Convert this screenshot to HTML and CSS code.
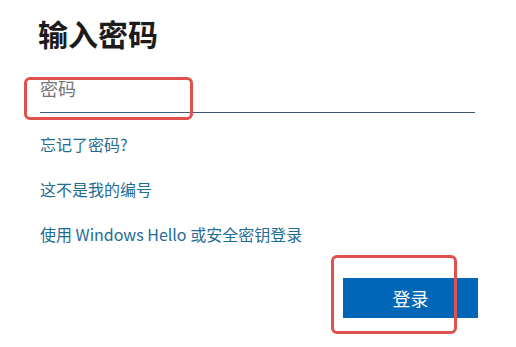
FILE: index.html
```html
<!DOCTYPE html>
<html lang="zh">
  <head>
    <meta charset="UTF-8" />
    <title>输入密码</title>
    <link rel="stylesheet" href="styles.css">
  </head>
  <body>
    <div class="container">
      <h1 class="title">输入密码</h1>
      <div class="field">
        <input type="password" class="password-input" placeholder="密码" />
        <span class="mark mark-input"></span>
      </div>
      <div class="links">
        <a class="link" href="#">忘记了密码?</a>
        <a class="link" href="#">这不是我的编号</a>
        <a class="link" href="#">使用 Windows Hello 或安全密钥登录</a>
      </div>
      <div class="actions">
        <button class="login-btn">登录</button>
        <span class="mark mark-btn"></span>
      </div>
    </div>
  </body>
</html>
```

FILE: styles.css
```css
* {
  margin: 0;
  padding: 0;
  box-sizing: border-box;
}
html,
body {
  min-height: 100%;
}
body {
  font-family: "Noto Sans CJK SC", "Noto Sans", sans-serif;
  background: #fff;
  color: #1b1b1b;
  padding-bottom: 30px;
}
.container {
  width: 438px;
  margin-left: 40px;
  padding-top: 18px;
}
.title {
  font-size: 30px;
  line-height: 30px;
  font-weight: 700;
  margin-left: -2px;
  color: #1b1b1b;
}
.field {
  position: relative;
  margin-top: 28px;
  width: 435px;
}
.password-input {
  display: block;
  width: 100%;
  height: 37px;
  border: none;
  border-bottom: 1px solid #3c5a78;
  outline: none;
  font-family: inherit;
  font-size: 18px;
  line-height: 22px;
  padding: 0 0 12px 0;
  background: transparent;
}
.password-input::placeholder {
  color: #767676;
}
.links {
  display: flex;
  flex-direction: column;
  align-items: flex-start;
  gap: 23px;
  margin-top: 20px;
}
.link {
  font-size: 16px;
  line-height: 22px;
  color: #1f6c94;
  text-decoration: none;
}
.actions {
  position: relative;
  display: flex;
  justify-content: flex-end;
  margin-top: 33px;
}
.login-btn {
  width: 135px;
  height: 40px;
  border: none;
  background: #0067b8;
  color: #fff;
  font-family: inherit;
  font-size: 18px;
  cursor: pointer;
}
.mark {
  position: absolute;
  border: 3px solid #e0504c;
  border-radius: 6px;
  pointer-events: none;
}
.mark-input {
  left: -16px;
  top: 1px;
  width: 169px;
  height: 43px;
}
.mark-btn {
  right: 21px;
  top: -23px;
  width: 126px;
  height: 79px;
}
```
